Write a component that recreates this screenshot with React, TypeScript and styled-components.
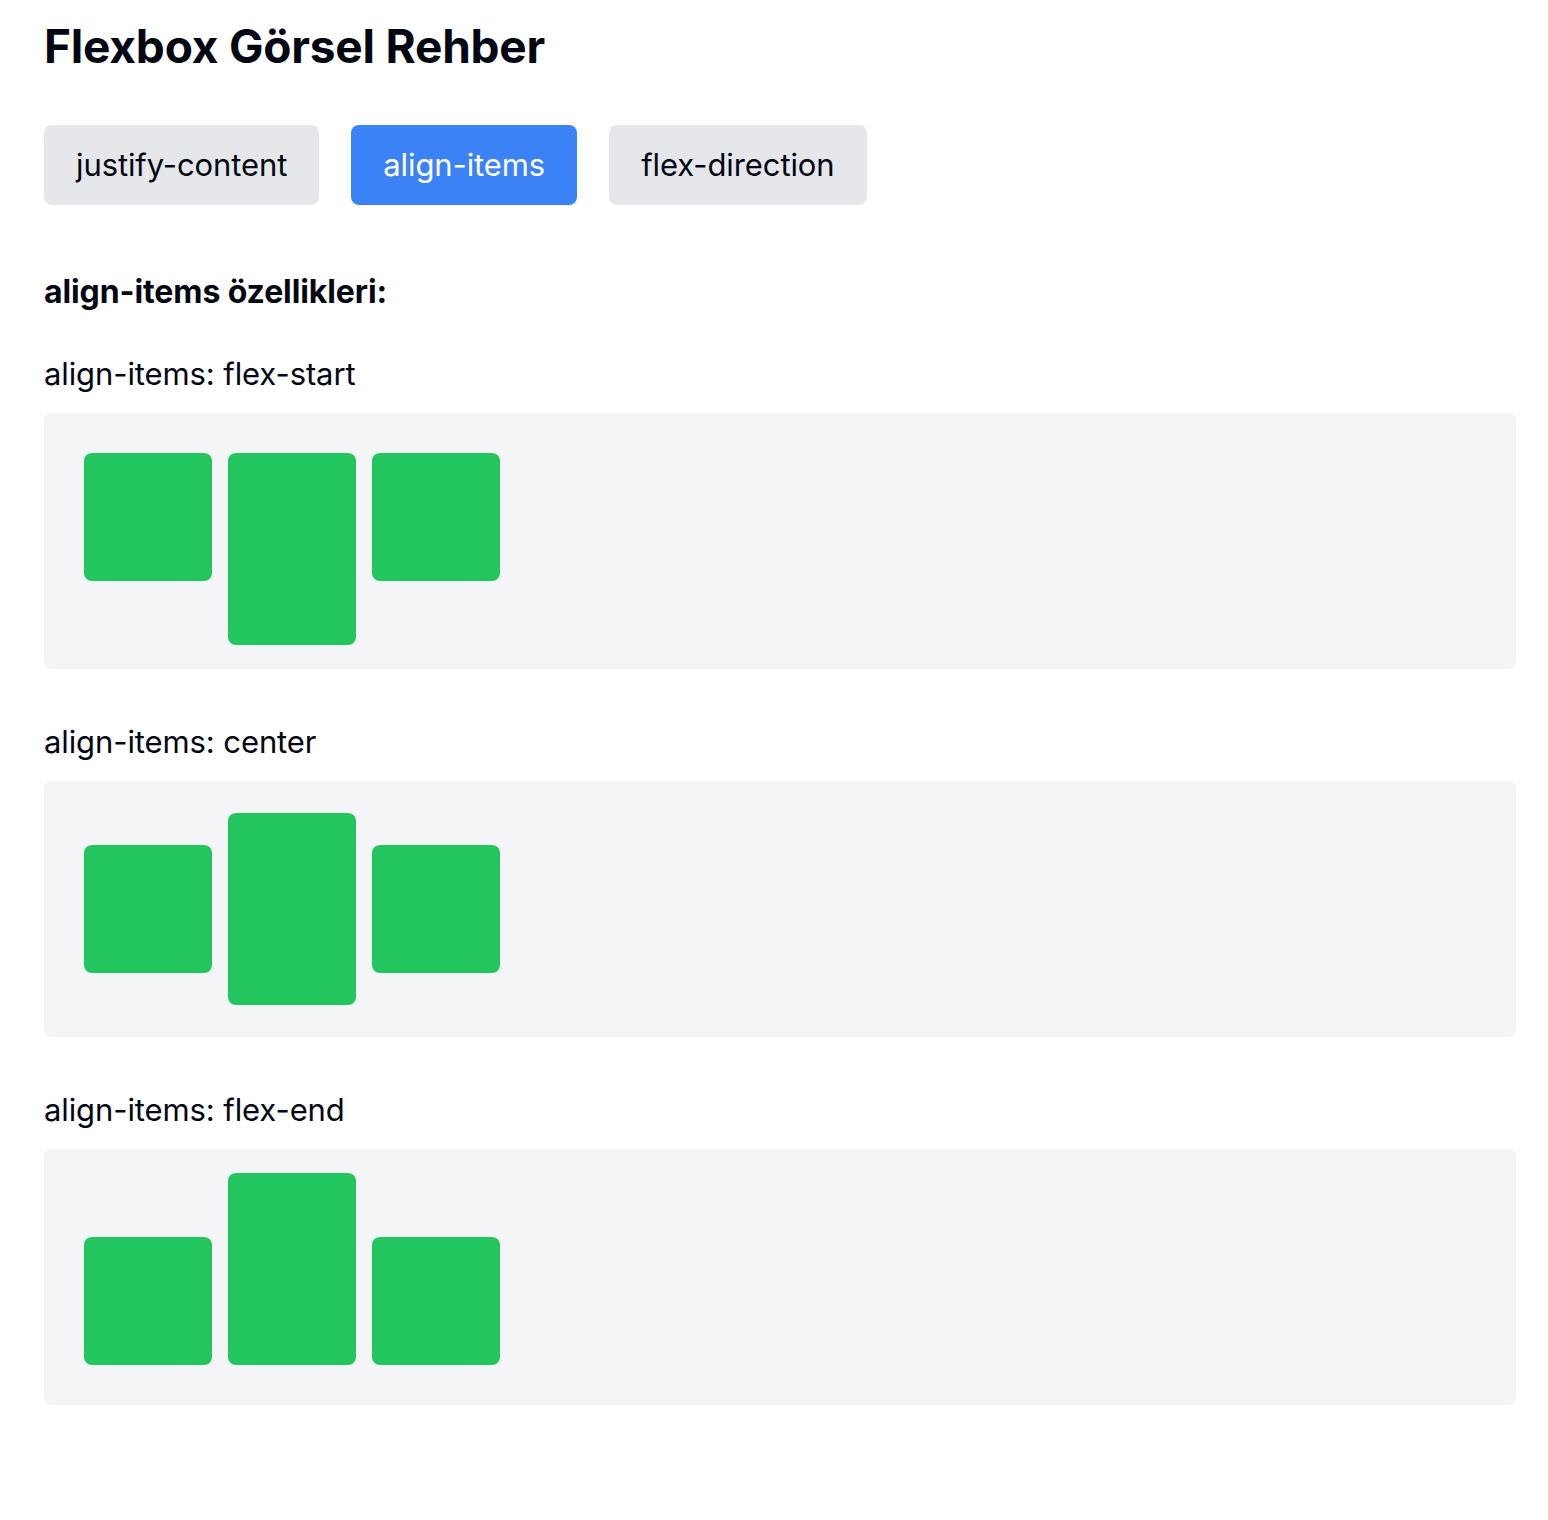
import React, { useState } from "react";
import styled, { createGlobalStyle } from "styled-components";

const GlobalStyle = createGlobalStyle`
  html, body { margin: 0; padding: 0; background: #ffffff; }
  body { font-family: Inter, "Noto Sans", "Liberation Sans", sans-serif; color: #030712; }
  * { box-sizing: border-box; }
`;

const Page = styled.div`
  padding: 18px 32px 80px 44px;
`;

const Title = styled.h1`
  margin: 0;
  font-size: 46px;
  line-height: 56px;
  font-weight: 700;
  letter-spacing: -0.2px;
`;

const TabBar = styled.div`
  display: flex;
  gap: 32px;
  margin-top: 51px;
`;

const Tab = styled.button<{ $active?: boolean }>`
  border: none;
  border-radius: 8px;
  padding: 24px 32px;
  font-family: inherit;
  font-size: 31px;
  line-height: 32px;
  letter-spacing: -0.1px;
  cursor: pointer;
  background: ${(p) => (p.$active ? "#3b82f6" : "#e5e7eb")};
  color: ${(p) => (p.$active ? "#ffffff" : "#030712")};
`;

const Heading = styled.h2`
  margin: 67px 0 44px;
  font-size: 32px;
  line-height: 40px;
  font-weight: 700;
  letter-spacing: -0.1px;
`;

const Section = styled.section`
  & + & {
    margin-top: 55px;
  }
`;

const Label = styled.div`
  font-size: 31px;
  line-height: 36px;
  letter-spacing: -0.1px;
  margin-bottom: 21px;
`;

const Stage = styled.div<{ $align: string }>`
  display: flex;
  gap: 16px;
  align-items: ${(p) => p.$align};
  height: 256px;
  padding: 40px;
  background: #f3f4f6;
  border-radius: 8px;
`;

const Box = styled.div<{ $tall?: boolean }>`
  flex: none;
  width: 128px;
  height: ${(p) => (p.$tall ? "192px" : "128px")};
  background: #22c55e;
  border-radius: 8px;
`;

const tabs = ["justify-content", "align-items", "flex-direction"];
const aligns = ["flex-start", "center", "flex-end"];

export default function App() {
  const [active, setActive] = useState("align-items");
  return (
    <Page>
      <GlobalStyle />
      <Title>Flexbox Görsel Rehber</Title>
      <TabBar>
        {tabs.map((t) => (
          <Tab key={t} $active={t === active} onClick={() => setActive(t)}>
            {t}
          </Tab>
        ))}
      </TabBar>
      <Heading>align-items özellikleri:</Heading>
      {aligns.map((a) => (
        <Section key={a}>
          <Label>align-items: {a}</Label>
          <Stage $align={a}>
            <Box />
            <Box $tall />
            <Box />
          </Stage>
        </Section>
      ))}
    </Page>
  );
}
